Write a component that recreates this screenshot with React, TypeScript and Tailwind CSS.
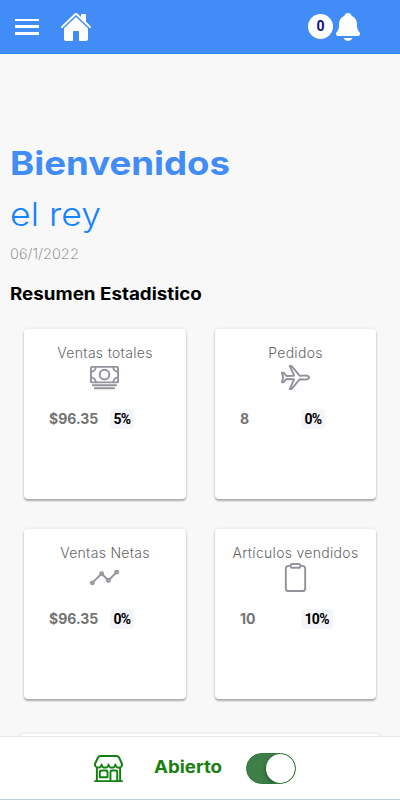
import type { ReactNode } from 'react';
import {
  IoAirplaneOutline,
  IoAnalyticsOutline,
  IoCashOutline,
  IoClipboardOutline,
  IoHome,
  IoNotifications,
  IoStorefrontOutline,
} from 'react-icons/io5';

type Stat = {
  title: string;
  value: string;
  change: string;
  icon: ReactNode;
};

const STATS: Stat[] = [
  { title: 'Ventas totales', value: '$96.35', change: '5%', icon: <IoCashOutline /> },
  { title: 'Pedidos', value: '8', change: '0%', icon: <IoAirplaneOutline /> },
  { title: 'Ventas Netas', value: '$96.35', change: '0%', icon: <IoAnalyticsOutline /> },
  { title: 'Artículos vendidos', value: '10', change: '10%', icon: <IoClipboardOutline /> },
];

const CARD = 'rounded-[4px] bg-white shadow-[0_2px_2px_rgba(0,0,0,0.28),0_0_3px_rgba(0,0,0,0.14)]';

function StatCard({ stat }: { stat: Stat }) {
  return (
    <div className={`h-[170px] pt-[14px] ${CARD}`}>
      <p className="text-center text-[14px] leading-5 font-light tracking-[0.3px] whitespace-nowrap text-[#666]">
        {stat.title}
      </p>
      <div className="-mt-px flex justify-center pr-px text-[31px] leading-none text-[#92949c]">{stat.icon}</div>
      <div className="mt-4 flex items-center pl-[25px]">
        <span className="w-[60.5px] text-[14px] leading-5 font-bold text-[#737373]">{stat.value}</span>
        <span className="h-5 rounded-[4px] bg-[#f4f5f8] px-1 font-['Roboto',sans-serif] text-[14px] leading-5 font-bold tracking-[-0.7px] text-black">
          {stat.change}
        </span>
      </div>
    </div>
  );
}

export default function App() {
  return (
    <div className="flex h-[800px] w-[400px] flex-col overflow-hidden bg-[#f8f8f8] font-['Inter',sans-serif]">
      {/* Barra superior */}
      <header className="flex h-[54px] flex-none items-center border-b border-[#2784fa] bg-[#428cf8] pl-[15px] text-white">
        <button aria-label="Menú" className="flex h-4 w-6 flex-col justify-between">
          <span className="h-[2.5px] w-full bg-white" />
          <span className="h-[2.5px] w-full bg-white" />
          <span className="h-[2.5px] w-full bg-white" />
        </button>
        <IoHome className="ml-[21px] h-8 w-8" />
        <span className="ml-[216px] flex h-[25px] w-[25px] items-center justify-center rounded-full bg-white pb-px font-['Roboto',sans-serif] text-[14px] font-bold text-[#10107c]">
          0
        </span>
        <IoNotifications className="-ml-px h-8 w-8" />
      </header>

      <main className="min-h-0 flex-1 overflow-hidden">
        <div className="pt-[87px] pl-[10px]">
          <h1 className="w-fit origin-left scale-x-[1.11] text-[33px] leading-[44px] font-bold text-[#428cf8]">
            Bienvenidos
          </h1>
          <h2 className="mt-[7px] w-fit origin-left scale-x-[1.08] text-[33px] leading-[44px] font-light text-[#1683ff]">
            el rey
          </h2>
          <p className="mt-[8px] w-fit origin-left scale-x-[1.05] text-[14px] leading-5 font-extralight text-[#777]">
            06/1/2022
          </p>
          <h3 className="mt-[19px] w-fit origin-left scale-x-[1.105] text-[17px] leading-[22px] font-bold text-black">
            Resumen Estadistico
          </h3>
        </div>

        <div className="mt-6 grid grid-cols-[162px_161px] gap-x-[29px] gap-y-[30px] pl-6">
          {STATS.map((stat) => (
            <StatCard key={stat.title} stat={stat} />
          ))}
          <div className={`col-span-2 -mx-1 mt-[5px] h-[170px] ${CARD}`} />
        </div>
      </main>

      {/* Estado de la tienda */}
      <footer className="flex h-[64px] flex-none items-center border-t border-b border-t-[#e6e6e6] border-b-[#bfc9e2] bg-white pl-[93px]">
        <IoStorefrontOutline className="h-[31px] w-[31px] text-[#118011]" />
        <div className="ml-[30px] w-[92px]">
          <span className="inline-block origin-left scale-x-[1.1] text-[17px] font-bold text-[#188010]">Abierto</span>
        </div>
        <button
          role="switch"
          aria-checked="true"
          aria-label="Abierto"
          className="flex h-[31px] w-[50px] items-center justify-end overflow-hidden rounded-full border border-[#2c7c36] bg-[#3d7e49]"
        >
          <span className="h-[29px] w-[29px] rounded-full bg-white shadow-[0_2px_4px_rgba(0,60,0,0.6)]" />
        </button>
      </footer>
    </div>
  );
}
